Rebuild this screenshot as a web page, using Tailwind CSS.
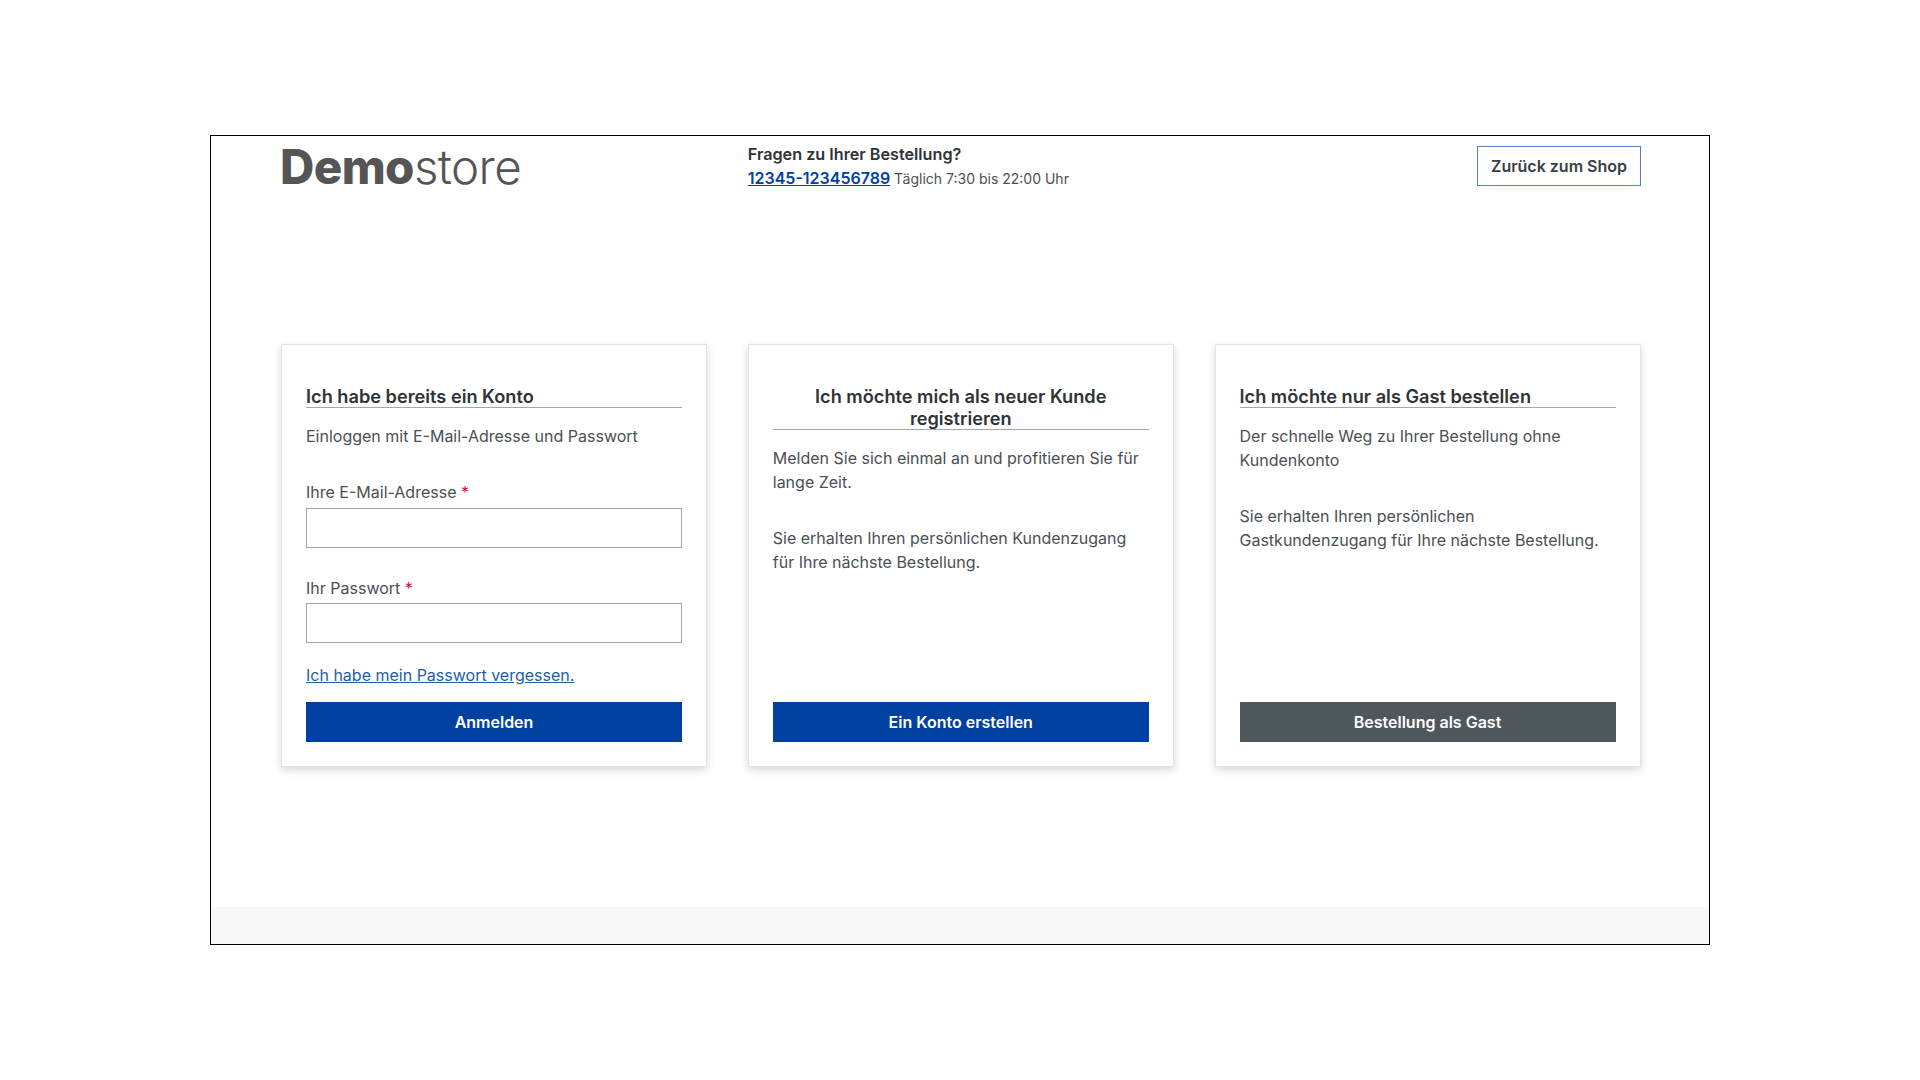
<!DOCTYPE html>
<html lang="de">
<head>
  <meta charset="UTF-8" />
  <title>Demostore Anmeldung</title>
  <script src="https://cdn.jsdelivr.net/npm/@tailwindcss/browser@4"></script>
</head>
<body class="bg-white h-[1080px] flex items-center justify-center font-['Inter',sans-serif] text-[16px] leading-6 text-[#4a4f54]">
  <div class="w-[1500px] h-[810px] border border-black flex flex-col">

    <!-- Header -->
    <header class="h-[208px] px-[70px] grid grid-cols-[426px_426px_426px] gap-x-[40.75px] items-start">
      <div class="pt-[6px] -ml-[1px] text-[47.5px] leading-[50px] text-[#555555] tracking-[-0.6px] whitespace-nowrap"><span class="font-extrabold">Demo</span><span class="font-light">store</span></div>
      <div class="pt-[6px]">
        <p class="font-semibold text-[16.2px] text-[#2f3338] leading-6">Fragen zu Ihrer Bestellung?</p>
        <p class="leading-6 text-[14px]"><a href="#" class="text-[16px] font-semibold text-[#0040a0] underline">12345-123456789</a> Täglich 7:30 bis 22:00 Uhr</p>
      </div>
      <div class="flex justify-end pt-[10px]">
        <a href="#" class="h-10 px-[12.5px] flex items-center border border-[#5580c6] font-semibold text-[#3a3f44]">Zurück zum Shop</a>
      </div>
    </header>

    <!-- Cards -->
    <main class="flex-1 px-[70px] grid grid-cols-[426px_426px_426px] gap-x-[40.75px] items-start">

      <section class="h-[423px] bg-white border border-[#e1e5e9] shadow-[0_3px_8px_rgba(0,0,0,0.16)] px-6 pt-10 pb-6 flex flex-col">
        <h2 class="text-[18.2px] leading-[22px] font-semibold text-[#2f3338] border-b border-[#a0a7ae]">Ich habe bereits ein Konto</h2>
        <p class="mt-4">Einloggen mit E-Mail-Adresse und Passwort</p>
        <label class="mt-8 block">Ihre E-Mail-Adresse <span class="text-[#d0103a]">*</span></label>
        <input type="email" class="mt-1 block w-full h-10 border border-[#a0a7ae] bg-white" />
        <label class="mt-[28px] block">Ihr Passwort <span class="text-[#d0103a]">*</span></label>
        <input type="password" class="mt-[3px] block w-full h-10 border border-[#a0a7ae] bg-white" />
        <a href="#" class="mt-5 text-[#1f5cab] underline">Ich habe mein Passwort vergessen.</a>
        <button class="mt-auto h-10 bg-[#0040a0] text-white font-semibold">Anmelden</button>
      </section>

      <section class="h-[423px] bg-white border border-[#e1e5e9] shadow-[0_3px_8px_rgba(0,0,0,0.16)] px-6 pt-10 pb-6 flex flex-col">
        <h2 class="text-[18.2px] leading-[22px] font-semibold text-[#2f3338] border-b border-[#a0a7ae] text-center">Ich möchte mich als neuer Kunde registrieren</h2>
        <p class="mt-4">Melden Sie sich einmal an und profitieren Sie für lange Zeit.</p>
        <p class="mt-8">Sie erhalten Ihren persönlichen Kundenzugang für Ihre nächste Bestellung.</p>
        <button class="mt-auto h-10 bg-[#0040a0] text-white font-semibold">Ein Konto erstellen</button>
      </section>

      <section class="h-[423px] bg-white border border-[#e1e5e9] shadow-[0_3px_8px_rgba(0,0,0,0.16)] px-6 pt-10 pb-6 flex flex-col">
        <h2 class="text-[18.2px] leading-[22px] font-semibold text-[#2f3338] border-b border-[#a0a7ae]">Ich möchte nur als Gast bestellen</h2>
        <p class="mt-4">Der schnelle Weg zu Ihrer Bestellung ohne Kundenkonto</p>
        <p class="mt-8">Sie erhalten Ihren persönlichen Gastkundenzugang für Ihre nächste Bestellung.</p>
        <button class="mt-auto h-10 bg-[#4d575c] text-white font-semibold">Bestellung als Gast</button>
      </section>
    </main>

    <footer class="h-[37px] bg-[#f8f8f8]"></footer>
  </div>
</body>
</html>
